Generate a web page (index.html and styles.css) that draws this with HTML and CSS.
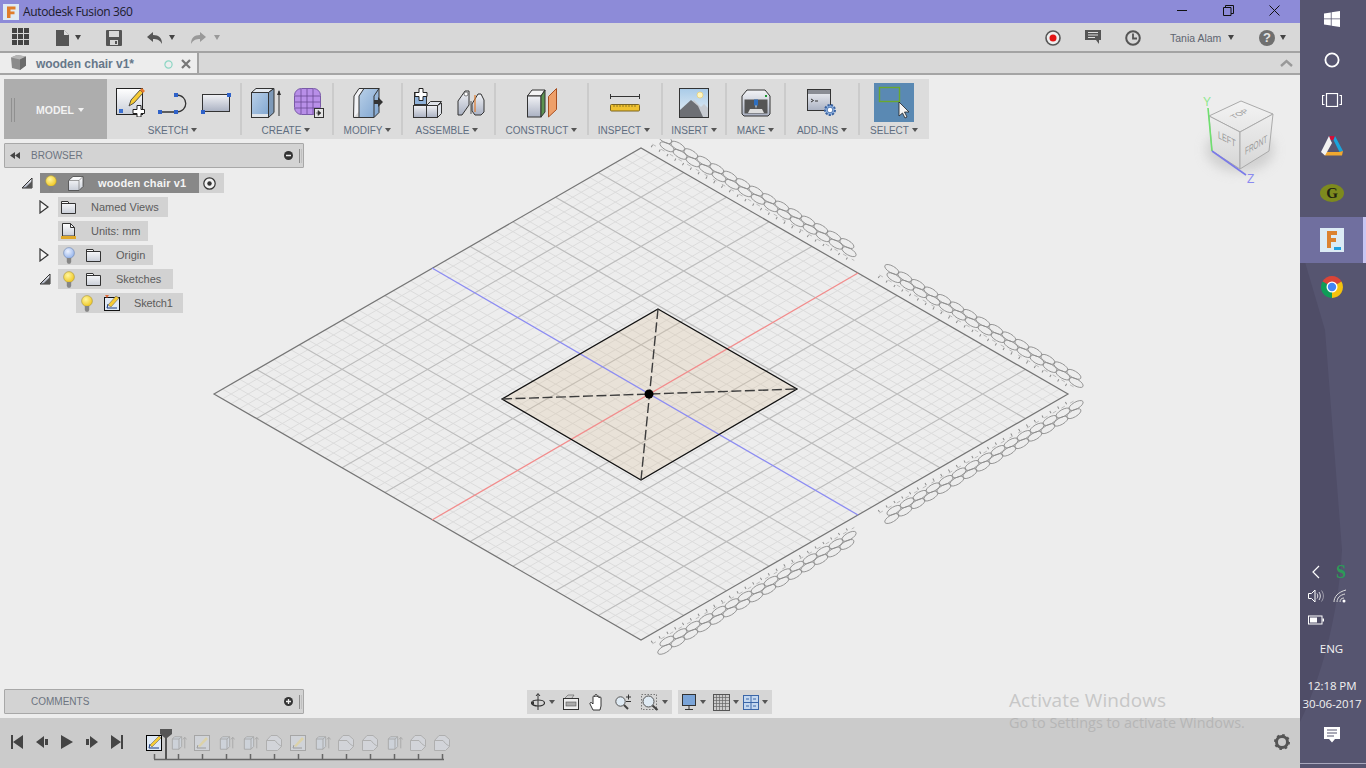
FILE: index.html
```html
<!DOCTYPE html>
<html lang="en">
<head>
<meta charset="utf-8">
<title>Autodesk Fusion 360</title>
<link rel="stylesheet" href="styles.css">
</head>
<body>
<svg class="defs" aria-hidden="true">
  <defs>
    <linearGradient id="gWhite" x1="0" y1="0" x2="0" y2="1"><stop offset="0" stop-color="#fff"/><stop offset="1" stop-color="#c9ced8"/></linearGradient>
    <linearGradient id="gSteel" x1="0" y1="0" x2="0" y2="1"><stop offset="0" stop-color="#f2f3f6"/><stop offset="1" stop-color="#aab1c2"/></linearGradient>
    <linearGradient id="gBlue" x1="0" y1="0" x2="1" y2="1"><stop offset="0" stop-color="#b9d0e8"/><stop offset="1" stop-color="#7fa5d0"/></linearGradient>
    <linearGradient id="gSky" x1="0" y1="0" x2="0" y2="1"><stop offset="0" stop-color="#a9cbe8"/><stop offset="1" stop-color="#e8f0f6"/></linearGradient>
    <radialGradient id="gBulbY" cx=".4" cy=".35" r=".7"><stop offset="0" stop-color="#fff6a0"/><stop offset="1" stop-color="#efc41a"/></radialGradient>
    <radialGradient id="gBulbB" cx=".4" cy=".35" r=".7"><stop offset="0" stop-color="#eef3ff"/><stop offset="1" stop-color="#8fb0ea"/></radialGradient>
    <symbol id="bulbY" viewBox="0 0 12 17"><circle cx="6" cy="6" r="5.400" fill="url(#gBulbY)" stroke="#a89640" stroke-width=".6"/><path d="M3.800 11h4.400v4l-1 1.800H4.800l-1-1.800z" fill="#858585"/></symbol>
    <symbol id="bulbB" viewBox="0 0 12 17"><circle cx="6" cy="6" r="5.400" fill="url(#gBulbB)" stroke="#6f86b0" stroke-width=".6"/><path d="M3.800 11h4.400v4l-1 1.800H4.800l-1-1.800z" fill="#858585"/></symbol>
    <symbol id="folder" viewBox="0 0 15 14"><path d="M.5 1.500h6.500l1 2h6.500v10H.5z" fill="url(#gWhite)" stroke="#333"/><path d="M.5 3.500h7.500" stroke="#333" fill="none"/></symbol>
    <symbol id="twOpen" viewBox="0 0 12 12"><path d="M1 11 11 1v10z" fill="url(#gSteel)" stroke="#333"/><path d="M4 11 11 4v7z" fill="#555"/></symbol>
    <symbol id="twClosed" viewBox="0 0 10 14"><path d="M1 1l8 6-8 6z" fill="#f5f5f5" stroke="#333" stroke-width="1.200"/></symbol>
    <symbol id="tlBox" viewBox="0 0 18 18"><path d="M1.500 4.500 4 2h8v11l-3 3H1.500z" fill="#cfd9e6" stroke="#888"/><path d="M9 16V4.500H1.500M9 4.500 12 2" fill="none" stroke="#888"/><path d="M15.500 15V3M13.500 5l2-2.500 2 2.500" fill="none" stroke="#888"/></symbol>
    <symbol id="tlSketch" viewBox="0 0 16 16"><rect x=".5" y=".5" width="15" height="15" fill="#d5dbe4" stroke="#888"/><path d="M3 13h9M3 13l1-3" stroke="#777" fill="none"/><path d="M4 11 12 2l2 2-8 8z" fill="#ead98f"/></symbol>
    <symbol id="tlShape" viewBox="0 0 16 16"><path d="M.5 5.500 5 .5h6l4.500 4v7l-4 4h-11z" fill="#d8dde6" stroke="#999"/><path d="M.5 5.500H9l2.500 3 4 3" fill="none" stroke="#999"/></symbol>
  </defs>
</svg>

<div class="screen">
  <div class="app">
    <header class="titlebar">
      <svg class="app-logo" width="16" height="16" viewBox="0 0 16 16"><rect width="16" height="16" fill="#dfeaf3"/><path d="M4 2.500h8.500v3H7.500v2h4v2.800h-4V14H4z" fill="#e07d2b"/></svg>
      <span class="title-text">Autodesk Fusion 360</span>
      <div class="win-btns">
        <span class="win-btn"><svg width="11" height="11" viewBox="0 0 11 11"><path d="M0 5.500h10" stroke="#111"/></svg></span>
        <span class="win-btn"><svg width="11" height="11" viewBox="0 0 11 11"><path d="M.5 2.500h7.500v8H.5zM2.500 2.500V.5h8v8H8" fill="none" stroke="#111"/></svg></span>
        <span class="win-btn"><svg width="11" height="11" viewBox="0 0 11 11"><path d="M.5.5l10 10M10.500.5l-10 10" stroke="#111"/></svg></span>
      </div>
    </header>

    <div class="toolbar">
      <svg class="tool-grid" width="17" height="17" viewBox="0 0 17 17" fill="#444"><rect width="5" height="5"/><rect x="6" width="5" height="5"/><rect x="12" width="5" height="5"/><rect y="6" width="5" height="5"/><rect x="6" y="6" width="5" height="5"/><rect x="12" y="6" width="5" height="5"/><rect y="12" width="5" height="5"/><rect x="6" y="12" width="5" height="5"/><rect x="12" y="12" width="5" height="5"/></svg>
      <svg class="ml27" width="13" height="16" viewBox="0 0 13 16"><path d="M0 0h8l5 5v11H0z" fill="#555"/><path d="M8 0v5h5" fill="#ddd"/></svg>
      <i class="caret ml6"></i>
      <svg class="ml25" width="16" height="16" viewBox="0 0 16 16"><path d="M1 0h14a1 1 0 0 1 1 1v14a1 1 0 0 1-1 1H1a1 1 0 0 1-1-1V1a1 1 0 0 1 1-1z" fill="#555"/><rect x="3" y="1" width="10" height="6" fill="#d8d8d8"/><rect x="4" y="10" width="8" height="5" fill="#d8d8d8"/><rect x="9" y="11" width="2" height="3" fill="#555"/></svg>
      <svg class="ml24" width="17" height="14" viewBox="0 0 17 14"><path d="M7 1 1 6l6 5V8c4 0 7 1 9 5 0-6-3-9-9-9z" fill="#555"/></svg>
      <i class="caret ml6"></i>
      <svg class="ml15" width="17" height="14" viewBox="0 0 17 14"><path d="M10 1l6 5-6 5V8C6 8 3 9 1 13c0-6 3-9 9-9z" fill="#999"/></svg>
      <i class="caret caret-dim ml7"></i>
      <div class="tool-right">
        <svg width="16" height="16" viewBox="0 0 16 16"><circle cx="8" cy="8" r="7" fill="#eee" stroke="#555" stroke-width="1.600"/><circle cx="8" cy="8" r="3.500" fill="#e31414"/></svg>
        <svg class="ml24" width="16" height="15" viewBox="0 0 16 15"><path d="M0 0h16v10h-2v4l-3-4H0z" fill="#555"/><path d="M3 2.500h10M3 5h10M3 7.500h7" stroke="#ddd"/></svg>
        <svg class="ml24" width="16" height="16" viewBox="0 0 16 16"><circle cx="8" cy="8" r="6.800" fill="none" stroke="#555" stroke-width="2"/><path d="M8 3.500V8.500h4" fill="none" stroke="#555" stroke-width="1.800"/></svg>
        <span class="user ml29">Tania Alam</span>
        <i class="caret ml6"></i>
        <svg class="ml25" width="16" height="16" viewBox="0 0 16 16"><circle cx="8" cy="8" r="8" fill="#6f6f6f"/><text x="8" y="12" class="help-mark">?</text></svg>
        <i class="caret ml5"></i>
      </div>
    </div>

    <div class="tabbar">
      <div class="tab">
        <svg class="tab-cube" width="17" height="16" viewBox="0 0 17 16"><path d="M1 2.500 7 0l9 1.500v9L10 15l-8-2z" fill="#8b8b8b"/><path d="M1 2.500 10 4.500l6-3L7 0z" fill="#b5b5b5"/><path d="M10 4.500V15l6-4.500v-9z" fill="#6a6a6a"/></svg>
        <span class="tab-name">wooden chair v1*</span>
        <svg class="tab-status" width="9" height="9" viewBox="0 0 9 9"><circle cx="4.500" cy="4.500" r="3.600" fill="none" stroke="#8dd6c4" stroke-width="1.200"/></svg>
        <svg class="tab-close" width="10" height="10" viewBox="0 0 10 10"><path d="M1 1l8 8M9 1 1 9" stroke="#777" stroke-width="2.200"/></svg>
      </div>
      <svg class="tab-collapse" width="13" height="8" viewBox="0 0 13 8"><path d="M1 7l5.500-5L12 7" fill="none" stroke="#999" stroke-width="2.400"/></svg>
    </div>

    <main class="viewport">
      <svg class="scene" width="1300" height="643" viewBox="0 75 1300 643">
        <defs>
          <path id="chain" class="chain" d="M0 0a8 3.400 0 1 0 16 0a8 3.400 0 1 0-16 0M15 0a8 3.400 0 1 0 16 0a8 3.400 0 1 0-16 0M30 0a8 3.400 0 1 0 16 0a8 3.400 0 1 0-16 0M45 0a8 3.400 0 1 0 16 0a8 3.400 0 1 0-16 0M60 0a8 3.400 0 1 0 16 0a8 3.400 0 1 0-16 0M75 0a8 3.400 0 1 0 16 0a8 3.400 0 1 0-16 0M90 0a8 3.400 0 1 0 16 0a8 3.400 0 1 0-16 0M105 0a8 3.400 0 1 0 16 0a8 3.400 0 1 0-16 0M120 0a8 3.400 0 1 0 16 0a8 3.400 0 1 0-16 0M135 0a8 3.400 0 1 0 16 0a8 3.400 0 1 0-16 0M150 0a8 3.400 0 1 0 16 0a8 3.400 0 1 0-16 0M165 0a8 3.400 0 1 0 16 0a8 3.400 0 1 0-16 0M180 0a8 3.400 0 1 0 16 0a8 3.400 0 1 0-16 0M195 0a8 3.400 0 1 0 16 0a8 3.400 0 1 0-16 0M210 0a8 3.400 0 1 0 16 0a8 3.400 0 1 0-16 0"/>
          <g id="edgeLabels">
            <use href="#chain" x="8" y="-20"/>
            <use href="#chain" x="14" y="-14"/>
            <use href="#chain" x="270" y="-20"/>
            <use href="#chain" x="276" y="-14"/>
            <path d="M8-7H241M270-7H492" stroke="#8c8c8c" stroke-width="2.500" stroke-dasharray="1 8" fill="none"/>
            <path d="M8-9H241M270-9H500" stroke="#a4a4a4" stroke-width=".6" stroke-dasharray="4 6" fill="none"/>
          </g>
          <filter id="soft" x="-30%" y="-30%" width="160%" height="160%"><feGaussianBlur stdDeviation="6"/></filter>
          <linearGradient id="faceTop" x1="0" y1="0" x2="0" y2="1"><stop offset="0" stop-color="#f3f3f3"/><stop offset="1" stop-color="#e6e6e6"/></linearGradient>
          <linearGradient id="faceSide" x1="0" y1="0" x2="0" y2="1"><stop offset="0" stop-color="#eeeeee"/><stop offset="1" stop-color="#d6d6d6"/></linearGradient>
        </defs>

        <polygon class="plane" points="214,394 641,148 1068,394 641,640"/>
        <g transform="matrix(8.54 -4.92 8.54 4.92 214 394)">
          <path class="grid-minor" d="M1 0V50M2 0V50M3 0V50M4 0V50M6 0V50M7 0V50M8 0V50M9 0V50M11 0V50M12 0V50M13 0V50M14 0V50M16 0V50M17 0V50M18 0V50M19 0V50M21 0V50M22 0V50M23 0V50M24 0V50M26 0V50M27 0V50M28 0V50M29 0V50M31 0V50M32 0V50M33 0V50M34 0V50M36 0V50M37 0V50M38 0V50M39 0V50M41 0V50M42 0V50M43 0V50M44 0V50M46 0V50M47 0V50M48 0V50M49 0V50M0 1H50M0 2H50M0 3H50M0 4H50M0 6H50M0 7H50M0 8H50M0 9H50M0 11H50M0 12H50M0 13H50M0 14H50M0 16H50M0 17H50M0 18H50M0 19H50M0 21H50M0 22H50M0 23H50M0 24H50M0 26H50M0 27H50M0 28H50M0 29H50M0 31H50M0 32H50M0 33H50M0 34H50M0 36H50M0 37H50M0 38H50M0 39H50M0 41H50M0 42H50M0 43H50M0 44H50M0 46H50M0 47H50M0 48H50M0 49H50"/>
          <path class="grid-major" d="M5 0V50M10 0V50M15 0V50M20 0V50M30 0V50M35 0V50M40 0V50M45 0V50M0 5H50M0 10H50M0 15H50M0 20H50M0 30H50M0 35H50M0 40H50M0 45H50"/>
        </g>
        <polygon class="plane-edge" points="214,394 641,148 1068,394 641,640"/>
        <use href="#edgeLabels" transform="translate(641 148) rotate(29.95)"/>
        <use href="#edgeLabels" transform="translate(641 640) rotate(-29.95) scale(1 -1)"/>

        <polygon class="profile-fill" points="658,309 797,389 641,480 502,399"/>
        <line class="axis-blue" x1="432" y1="268" x2="858" y2="515"/>
        <line class="axis-red" x1="432" y1="520" x2="858" y2="273"/>
        <polygon class="profile-edge" points="658,309 797,389 641,480 502,399"/>
        <path class="profile-dash" d="M658 309 641 480M502 399 797 389"/>
        <circle cx="649" cy="394" r="4.500" fill="#000"/>

        <ellipse cx="1240" cy="150" rx="34" ry="22" fill="#b8b8b8" opacity=".55" filter="url(#soft)"/>
        <polygon points="1241,101 1273,114 1240,132 1209,116" fill="url(#faceTop)" stroke="#aaa"/>
        <polygon points="1209,116 1240,132 1240,169 1212,151" fill="url(#faceSide)" stroke="#aaa"/>
        <polygon points="1240,132 1273,114 1269,151 1240,169" fill="url(#faceSide)" stroke="#aaa"/>
        <text class="cube-text" transform="matrix(.85 -.4 .75 .45 1234 119)">TOP</text>
        <text class="cube-text" transform="matrix(.8 .42 0 1.150 1218 138)">LEFT</text>
        <text class="cube-text" transform="matrix(.72 -.42 0 1.150 1245 155)">FRONT</text>
        <line x1="1212" y1="151" x2="1208" y2="108" stroke="#6fe06f" stroke-width="1.600"/>
        <line x1="1212" y1="151" x2="1246" y2="175" stroke="#7a7ae8" stroke-width="1.600"/>
        <text class="axis-y" x="1203" y="106">Y</text>
        <text class="axis-z" x="1247" y="183">Z</text>
      </svg>

      <div class="overlay">
        <nav class="ribbon">
          <div class="model">
            <i class="grip"></i>
            <span class="model-label">MODEL</span>
            <i class="caret caret-white ml4"></i>
          </div>
          <section class="group g-sketch">
            <div class="icons">
              <svg width="29" height="29" viewBox="0 0 29 29"><rect x=".5" y=".5" width="26" height="26" fill="url(#gWhite)" stroke="#222"/><rect x="3" y="21" width="4" height="4" fill="#3a6fd0"/><path d="M13 18l2-6 9-10 3 3-9 10z" fill="#f6cb36" stroke="#333" stroke-width=".8"/><path d="M24 2l2-2 3 3-2 2z" fill="#e8792a"/><path d="M21 17.500h4v4h3.500v4H25v3.500h-4v-3.500h-4v-4h4z" fill="#fff" stroke="#222"/></svg>
              <svg width="32" height="24" viewBox="0 0 32 24"><path d="M3 21H19M19 4c13 0 13 17 0 17" fill="none" stroke="#333" stroke-width="1.300"/><rect x="1" y="19" width="4" height="4" fill="#2f62c9"/><rect x="17" y="19" width="4" height="4" fill="#2f62c9"/><rect x="17" y="2" width="4" height="4" fill="#2f62c9"/></svg>
              <svg width="30" height="24" viewBox="0 0 30 24"><rect x="1.500" y="3.500" width="27" height="17" fill="url(#gSteel)" stroke="#333"/><rect x="26" y="2" width="4" height="4" fill="#2f62c9"/><rect x="0" y="19" width="4" height="4" fill="#2f62c9"/></svg>
            </div>
            <div class="label">SKETCH<i class="caret caret-sm"></i></div>
          </section>
          <i class="rib-div"></i>
          <section class="group g-create">
            <div class="icons">
              <svg width="30" height="30" viewBox="0 0 30 30"><path d="M.5 4.500 5 .5h18l-5.500 4z" fill="#e4e9ef" stroke="#333"/><rect x=".5" y="4.500" width="17" height="25" fill="url(#gBlue)" stroke="#333"/><path d="M17.500 4.500 23 .5v24l-5.500 5z" fill="#7d99b8" stroke="#333"/><rect x="1" y="26" width="16" height="3" fill="#dfe4ea"/><path d="M28 28V3" stroke="#333"/><path d="M26 7 28 2l2 5z" fill="#333"/></svg>
              <svg width="30" height="30" viewBox="0 0 30 30"><rect x=".5" y=".5" width="26" height="26" rx="7" fill="#b88fe8" stroke="#7a5aa8"/><path d="M1 8h25M1 14h25M1 20h25M7 1v25M13 1v25M19 1v25" stroke="#6b4a96" stroke-width=".8" fill="none"/><rect x="20.500" y="20.500" width="9" height="9" fill="#e4e4e4" stroke="#333"/><path d="M22 25h3M24 22.500l3 2.500-3 2.500z" fill="#333" stroke="#333" stroke-width=".6"/></svg>
            </div>
            <div class="label">CREATE<i class="caret caret-sm"></i></div>
          </section>
          <i class="rib-div"></i>
          <section class="group g-modify">
            <div class="icons">
              <svg width="30" height="30" viewBox="0 0 30 30"><path d="M.5 29.500 1 8 6 .5h20l-5 7" fill="#f2f3f6" stroke="#333"/><path d="M6 29.500V8l5-7.500h15v24L21 29.500z" fill="url(#gBlue)" stroke="#333"/><path d="M.5 29.500H21" stroke="#333"/><path d="M21 8v21.500" stroke="#333"/><path d="M21 8 26 .5" stroke="#333"/><path d="M21 12h4v-3l5 5-5 5v-3h-4z" fill="#333"/></svg>
            </div>
            <div class="label">MODIFY<i class="caret caret-sm"></i></div>
          </section>
          <i class="rib-div"></i>
          <section class="group g-assemble">
            <div class="icons">
              <svg width="29" height="30" viewBox="0 0 29 30"><rect x="1.500" y="4.500" width="12" height="12" fill="#8fb2da" stroke="#333"/><rect x=".5" y="17.500" width="13" height="12" fill="url(#gSteel)" stroke="#333"/><rect x="13.500" y="17.500" width="11" height="12" fill="url(#gSteel)" stroke="#333"/><path d="M24.500 29.500l4-4V15l-4 2.500zM13.500 17.500l4-4h11l-4 4z" fill="#dfe3ea" stroke="#333"/><path d="M6 .5h4v4h4v4h-4v4H6v-4H2v-4h4z" fill="#fff" stroke="#222"/></svg>
              <svg width="28" height="28" viewBox="0 0 28 28"><path d="M1 12 8 2h4v14L5 26H1z" fill="url(#gSteel)" stroke="#333"/><path d="M15 15l6-10h3l3 6v12l-3 3h-6l-3-4z" fill="url(#gSteel)" stroke="#333"/><path d="M18 6v17" stroke="#e07b2a" stroke-width="1.200"/><path d="M14 12v13" stroke="#555"/><circle cx="9" cy="5" r="2" fill="#fff" stroke="#333" stroke-width=".6"/></svg>
            </div>
            <div class="label">ASSEMBLE<i class="caret caret-sm"></i></div>
          </section>
          <i class="rib-div"></i>
          <section class="group g-construct">
            <div class="icons">
              <svg width="30" height="30" viewBox="0 0 30 30"><path d="M.5 8 5 2h13l-4 6z" fill="#f4f4f4" stroke="#333"/><rect x=".5" y="8" width="13.500" height="21" fill="url(#gSteel)" stroke="#333"/><path d="M14 8l4-6v22l-4 5z" fill="#5c9350" stroke="#333"/><path d="M21.500 8.500 29.500.5v21l-8 7.500z" fill="#eea06a" stroke="#a84f20"/></svg>
            </div>
            <div class="label">CONSTRUCT<i class="caret caret-sm"></i></div>
          </section>
          <i class="rib-div"></i>
          <section class="group g-inspect">
            <div class="icons">
              <svg width="30" height="18" viewBox="0 0 30 18"><path d="M.5 0v5M29.500 0v5M1 2.500h28" stroke="#333" fill="none"/><rect x=".5" y="10.500" width="29" height="6.500" rx="1" fill="#efc12f" stroke="#7a6420"/><path d="M4 11v2M7 11v2M10 11v2M13 11v2M16 11v2M19 11v2M22 11v2M25 11v2" stroke="#7a6420" stroke-width=".8"/></svg>
            </div>
            <div class="label">INSPECT<i class="caret caret-sm"></i></div>
          </section>
          <i class="rib-div"></i>
          <section class="group g-insert">
            <div class="icons">
              <svg width="30" height="30" viewBox="0 0 30 30"><rect x=".5" y=".5" width="29" height="29" fill="url(#gSky)" stroke="#333"/><circle cx="21" cy="7" r="3" fill="#fff6c0" stroke="#e8c860" stroke-width=".6"/><path d="M1 29V25L15 12l7 7 3-3 4 4v9z" fill="#c8ccd2"/><path d="M1 29V22l11-10 7 6 5 11z" fill="#6d6f74"/></svg>
            </div>
            <div class="label">INSERT<i class="caret caret-sm"></i></div>
          </section>
          <i class="rib-div"></i>
          <section class="group g-make">
            <div class="icons">
              <svg width="30" height="28" viewBox="0 0 30 28"><path d="M1 7l5-6h18l5 6v18l-2 2H3l-2-2z" fill="url(#gSteel)" stroke="#333"/><rect x="3.500" y="10.500" width="23" height="14" fill="#555"/><rect x="13" y="10.500" width="4" height="6" fill="#2e6fc0"/><path d="M14 16.500h2l-1 3z" fill="#bcd"/><path d="M7 24l2-4h12l2 4z" fill="#ddd"/><rect x="24" y="6" width="2" height="2" fill="#1a9a30"/></svg>
            </div>
            <div class="label">MAKE<i class="caret caret-sm"></i></div>
          </section>
          <i class="rib-div"></i>
          <section class="group g-addins">
            <div class="icons">
              <svg width="30" height="28" viewBox="0 0 30 28"><rect x=".5" y=".5" width="23" height="21" fill="url(#gSteel)" stroke="#333"/><rect x="1" y="1" width="22" height="4" fill="#8a8d94"/><path d="M4 10l2.500 1.500L4 13M8 12h3" stroke="#333" fill="none"/><circle cx="23" cy="21" r="5" fill="#8fb4e4" stroke="#3a62a0" stroke-width="2" stroke-dasharray="2.200 1.200"/><circle cx="23" cy="21" r="2.800" fill="#fff" stroke="#3a62a0" stroke-width=".8"/></svg>
            </div>
            <div class="label">ADD-INS<i class="caret caret-sm"></i></div>
          </section>
          <i class="rib-div"></i>
          <section class="group g-select">
            <div class="icons">
              <span class="select-btn"><svg width="40" height="39" viewBox="0 0 40 39"><rect x="5.500" y="4.500" width="20" height="14" fill="none" stroke="#6aa82e" stroke-width="1.400"/><path d="M25 19v14l3.500-3 2.500 5 2-1-2.500-5h4.500z" fill="#f4f4f4" stroke="#222" stroke-width=".8"/></svg></span>
            </div>
            <div class="label">SELECT<i class="caret caret-sm"></i></div>
          </section>
        </nav>

        <section class="panel panel-browser">
          <svg class="panel-back" width="10" height="7" viewBox="0 0 10 7" fill="#444"><path d="M5 0v7L0 3.500zM10 0v7L5 3.500z"/></svg>
          <span class="panel-title">BROWSER</span>
          <svg class="panel-btn" width="9" height="9" viewBox="0 0 9 9"><circle cx="4.500" cy="4.500" r="4.500" fill="#333"/><path d="M2 4.500h5" stroke="#eee" stroke-width="1.500"/></svg>
          <i class="panel-grip"></i>
        </section>

        <ul class="tree">
          <li class="row lv0">
            <span class="twist"><svg width="12" height="12"><use href="#twOpen"/></svg></span>
            <div class="bar bar-root">
              <span class="bulb"><svg width="12" height="17"><use href="#bulbY"/></svg></span>
              <svg class="ico-cube" width="16" height="15" viewBox="0 0 16 15"><path d="M.5 4.500 5 .5h10v10l-4 4H.5z" fill="url(#gWhite)" stroke="#333" stroke-width=".7"/><path d="M.5 4.500H11v10M11 4.500 15 .5" fill="none" stroke="#777" stroke-width=".7"/></svg>
              <span class="name name-root">wooden chair v1</span>
            </div>
            <span class="radio"><svg width="13" height="13" viewBox="0 0 13 13"><circle cx="6.500" cy="6.500" r="5.700" fill="#f1f1f1" stroke="#333" stroke-width="1.200"/><circle cx="6.500" cy="6.500" r="2.200" fill="#333"/></svg></span>
          </li>
          <li class="row lv1">
            <span class="twist"><svg width="10" height="14"><use href="#twClosed"/></svg></span>
            <div class="bar b-named">
              <svg class="ico" width="15" height="14"><use href="#folder"/></svg>
              <span class="name name-gap">Named Views</span>
            </div>
          </li>
          <li class="row lv1">
            <span class="twist"></span>
            <div class="bar b-units">
              <svg class="ico" width="15" height="16" viewBox="0 0 15 16"><path d="M1.500.5h8l4 4V13h-12z" fill="url(#gWhite)" stroke="#333"/><path d="M9.500.5v4h4" fill="none" stroke="#333"/><rect y="13" width="15" height="3" fill="#e0a92a"/></svg>
              <span class="name name-gap">Units: mm</span>
            </div>
          </li>
          <li class="row lv1">
            <span class="twist"><svg width="10" height="14"><use href="#twClosed"/></svg></span>
            <div class="bar b-origin">
              <span class="bulb"><svg width="12" height="17"><use href="#bulbB"/></svg></span>
              <svg class="ico ml10" width="15" height="14"><use href="#folder"/></svg>
              <span class="name name-gap">Origin</span>
            </div>
          </li>
          <li class="row lv1">
            <span class="twist"><svg width="12" height="12"><use href="#twOpen"/></svg></span>
            <div class="bar b-sketches">
              <span class="bulb"><svg width="12" height="17"><use href="#bulbY"/></svg></span>
              <svg class="ico ml10" width="15" height="14"><use href="#folder"/></svg>
              <span class="name name-gap">Sketches</span>
            </div>
          </li>
          <li class="row lv2">
            <span class="twist"></span>
            <div class="bar b-sketch1">
              <span class="bulb"><svg width="12" height="17"><use href="#bulbY"/></svg></span>
              <svg class="ico ml10" width="16" height="16" viewBox="0 0 16 16"><rect x=".5" y="2.500" width="15" height="13" fill="#dfe9f5" stroke="#111"/><path d="M3 13h10M3 13l1-4" stroke="#1a3a80" fill="none"/><path d="M4 10 12 1l3 2-8 9z" fill="#f6cb36" stroke="#555" stroke-width=".5"/><path d="M1 0h4L3 3z" fill="#e06a3a"/></svg>
              <span class="name name-gap name-tight">Sketch1</span>
            </div>
          </li>
        </ul>

        <div class="bottom-row">
          <section class="panel panel-comments">
            <span class="panel-title">COMMENTS</span>
            <svg class="panel-btn" width="9" height="9" viewBox="0 0 9 9"><circle cx="4.500" cy="4.500" r="4.500" fill="#333"/><path d="M2 4.500h5M4.500 2v5" stroke="#eee" stroke-width="1.300"/></svg>
            <i class="panel-grip"></i>
          </section>
          <div class="nav nav-a">
            <svg width="14" height="18" viewBox="0 0 14 18"><path d="M7 1v16M5 3l2-2.500L9 3" fill="none" stroke="#333"/><ellipse cx="7" cy="10" rx="6.500" ry="3" fill="none" stroke="#333" stroke-width="1.200"/><path d="M0 10l3-2v4z" fill="#333"/></svg>
            <i class="caret caret-sm ml4"></i>
            <svg class="ml8" width="16" height="16" viewBox="0 0 16 16"><rect x=".5" y="4.500" width="15" height="11" fill="#eee" stroke="#333"/><rect x="3" y="8" width="10" height="4" fill="#aaa" stroke="#555" stroke-width=".6"/><path d="M2 4l3-3h6l-2 3" fill="#ccc" stroke="#555" stroke-width=".6"/></svg>
            <svg class="ml10" width="16" height="17" viewBox="0 0 16 17"><path d="M4 16 1 10c-.5-1.500 1-2 2-1l1 1V3c0-1.500 2-1.500 2 0V1.500c0-1.500 2-1.500 2 0V3c0-1.500 2-1.500 2 0v1c0-1.500 2-1.500 2 0v8l-1 4z" fill="#fff" stroke="#222" stroke-width=".9"/></svg>
            <svg class="ml10" width="16" height="16" viewBox="0 0 16 16"><circle cx="5.500" cy="7.500" r="4.700" fill="#dfeaf3" stroke="#555"/><path d="M9 11l4 4" stroke="#444" stroke-width="2"/><path d="M11 3h5M13.500.5v5M11 7.500h5" stroke="#333" fill="none"/></svg>
            <svg class="ml10" width="18" height="17" viewBox="0 0 18 17"><rect x=".5" y=".5" width="15" height="15" fill="none" stroke="#777" stroke-dasharray="1.500 1.500"/><circle cx="7.500" cy="7.500" r="5.500" fill="#dfeaf3" stroke="#555"/><path d="M11.500 11.500l5 4.500" stroke="#444" stroke-width="2.200"/></svg>
            <i class="caret caret-sm ml3"></i>
          </div>
          <div class="nav nav-b">
            <svg width="14" height="16" viewBox="0 0 14 16"><rect x=".5" y=".5" width="13" height="11" fill="#7aa4d8" stroke="#333"/><path d="M7 11.500V15M3 15.500h8" stroke="#333"/></svg>
            <i class="caret caret-sm ml4"></i>
            <svg class="ml7" width="17" height="17" viewBox="0 0 17 17"><rect x=".5" y=".5" width="16" height="16" fill="#ccc" stroke="#555"/><path d="M3.500 1v15M6.500 1v15M9.500 1v15M12.500 1v15M1 3.500h15M1 6.500h15M1 9.500h15M1 12.500h15" stroke="#666" stroke-width=".7"/></svg>
            <i class="caret caret-sm ml3"></i>
            <svg class="ml4" width="16" height="15" viewBox="0 0 16 15"><rect x=".5" y=".5" width="15" height="14" fill="#c4d8f0" stroke="#3a66a8"/><path d="M8 1v13M1 7.500h14M3 4h3M10 4h3M3 11h3M10 11h3" stroke="#3a66a8"/></svg>
            <i class="caret caret-sm ml3"></i>
          </div>
        </div>
      </div>
    </main>

    <footer class="timeline">
      <div class="tl-controls">
        <svg width="14" height="14" viewBox="0 0 14 14" fill="#444"><path d="M1 0h2v14H1zM13 0v14L3 7z"/></svg>
        <svg width="14" height="14" viewBox="0 0 14 14" fill="#444"><path d="M9 1v12L1 7zM10 4h3v6h-3z"/></svg>
        <svg width="14" height="14" viewBox="0 0 14 14" fill="#444"><path d="M1 0l12 7-12 7z"/></svg>
        <svg width="14" height="14" viewBox="0 0 14 14" fill="#444"><path d="M5 1v12l8-6zM1 4h3v6H1z"/></svg>
        <svg width="14" height="14" viewBox="0 0 14 14" fill="#444"><path d="M1 0l10 7-10 7zM11 0h2v14h-2z"/></svg>
      </div>
      <div class="tl-track">
        <div class="tl-items">
          <svg class="tl-item" width="16" height="16" viewBox="0 0 16 16"><rect x=".5" y=".5" width="15" height="15" fill="#dfe9f5" stroke="#000"/><path d="M3 13h10M3 13l1-4" stroke="#1a3a80" fill="none"/><path d="M4 10l9-9 2 2-9 9z" fill="#f6cb36" stroke="#555" stroke-width=".5"/></svg>
          <svg class="tl-item ghost wide" width="18" height="16"><use href="#tlBox"/></svg>
          <svg class="tl-item ghost" width="16" height="16"><use href="#tlSketch"/></svg>
          <svg class="tl-item ghost wide" width="18" height="16"><use href="#tlBox"/></svg>
          <svg class="tl-item ghost wide" width="18" height="16"><use href="#tlBox"/></svg>
          <svg class="tl-item ghost" width="16" height="16"><use href="#tlShape"/></svg>
          <svg class="tl-item ghost" width="16" height="16"><use href="#tlSketch"/></svg>
          <svg class="tl-item ghost wide" width="18" height="16"><use href="#tlBox"/></svg>
          <svg class="tl-item ghost" width="16" height="16"><use href="#tlShape"/></svg>
          <svg class="tl-item ghost" width="16" height="16"><use href="#tlShape"/></svg>
          <svg class="tl-item ghost wide" width="18" height="16"><use href="#tlBox"/></svg>
          <svg class="tl-item ghost" width="16" height="16"><use href="#tlShape"/></svg>
          <svg class="tl-item ghost" width="16" height="16"><use href="#tlShape"/></svg>
        </div>
        <svg class="tl-ruler" width="300" height="33" viewBox="0 0 300 33">
          <path d="M8 30.500H298M8.500 25v5M32.500 25v5M56.500 25v5M80.500 25v5M104.500 25v5M128.500 25v5M152.500 25v5M176.500 25v5M200.500 25v5M224.500 25v5M248.500 25v5M272.500 25v5M296.500 25v5" fill="none" stroke="#666" stroke-width="1.500"/>
          <path d="M14 0h12v5l-5 4v21h-2V9l-5-4z" fill="#555"/>
        </svg>
      </div>
      <svg class="tl-gear" width="16" height="16" viewBox="0 0 16 16"><circle cx="8" cy="8" r="5.500" fill="none" stroke="#555" stroke-width="3"/><circle cx="8" cy="8" r="7" fill="none" stroke="#555" stroke-width="2" stroke-dasharray="2.500 3"/></svg>
    </footer>

    <div class="activate">
      <div class="activate-big">Activate Windows</div>
      <div class="activate-small">Go to Settings to activate Windows.</div>
    </div>
  </div>

  <aside class="taskbar">
    <svg class="tb-wedge" width="66" height="768" viewBox="0 0 66 768"><path d="M0 245 25 330 42 550C38 620 20 680 0 722z" fill="#4f4d67"/></svg>
    <div class="tb-top">
      <div class="tb-s1"><svg width="16" height="16" viewBox="0 0 16 16" fill="#fff"><path d="M0 2.500 6.800 1.400V7.500H0zM7.600 1.300 16 0v7.500H7.600zM0 8.300h6.800v6.200L0 13.500zM7.600 8.300H16V16L7.600 14.700z"/></svg></div>
      <div class="tb-s2"><svg width="16" height="16" viewBox="0 0 16 16"><circle cx="8" cy="8" r="6.600" fill="none" stroke="#fff" stroke-width="1.800"/></svg></div>
      <div class="tb-s3"><svg width="20" height="14" viewBox="0 0 20 14" fill="none" stroke="#fff" stroke-width="1.200"><rect x="4.500" y=".5" width="11" height="13"/><path d="M2.500 2.500H.5v9h2M17.500 2.500h2v9h-2"/></svg></div>
      <div class="tb-item"><svg width="24" height="22" viewBox="0 0 24 22"><path d="M9 1h6l-1.500 4h-3z" fill="#d0103a"/><path d="M15 1l8 15-3.500 1L13.500 5z" fill="#1aa5dc"/><path d="M2 17h17.500l3.500-1-1 4.500H5z" fill="#f0a830"/><path d="M9 1 1 17l4 3.500L7 17 12 8 10.500 5z" fill="#f2f2f2"/></svg></div>
      <div class="tb-item"><span class="g-blob"><span class="g-letter">G</span></span></div>
      <div class="tb-item tb-active"><span class="f-tile"><svg width="24" height="24" viewBox="0 0 24 24"><path d="M0 0h24v24H0z" fill="#dcebf5"/><path d="M7 3h10v4h-6v3h5v4h-5v6H7z" fill="#dc8230"/><rect x="14" y="19" width="7" height="3" fill="#22a0e0"/></svg></span></div>
      <div class="tb-item"><svg width="24" height="24" viewBox="0 0 24 24"><path d="M2.500 6.500A11 11 0 0 1 21.500 6.500L12 12z" fill="#db4437"/><path d="M21.500 6.500A11 11 0 0 1 12 23L12 12z" fill="#f4c20d"/><path d="M12 23A11 11 0 0 1 2.500 6.500L12 12z" fill="#0f9d58"/><circle cx="12" cy="12" r="5.500" fill="#fff"/><circle cx="12" cy="12" r="4.200" fill="#4285f4"/></svg></div>
    </div>
    <div class="tray">
      <div class="tray-row">
        <svg class="tray-ico" width="16" height="14" viewBox="0 0 16 14"><path d="M11 1 5 7l6 6" fill="none" stroke="#fff" stroke-width="1.200"/></svg>
        <span class="tray-s">S</span>
      </div>
      <div class="tray-row">
        <svg class="tray-ico" width="16" height="14" viewBox="0 0 16 14" fill="none" stroke="#fff"><path d="M.5 4.500h3l3.500-3.500v12L3.500 9.500h-3z"/><path d="M9 4.500c1 1.500 1 3.500 0 5M11 3c1.800 2.500 1.800 5.500 0 8" stroke-opacity=".8"/><path d="M13.500 1.500c2.500 3.500 2.500 7.500 0 11" stroke-opacity=".45"/></svg>
        <svg class="tray-ico" width="16" height="14" viewBox="0 0 16 14" fill="none" stroke="#ddd"><path d="M1 13C1 8 5 3 13 1M4 13c0-4 3-7 8-8M7 13c0-2 1-4 4-4"/><circle cx="11" cy="12" r="1.500" fill="#fff" stroke="none"/></svg>
      </div>
      <div class="tray-row">
        <svg class="tray-ico" width="16" height="14" viewBox="0 0 16 14"><rect x=".5" y="3" width="13.500" height="8" fill="none" stroke="#fff"/><rect x="2" y="4.500" width="7" height="5" fill="#fff"/><rect x="14.500" y="5.500" width="1.500" height="3" fill="#fff"/></svg>
      </div>
      <div class="tray-eng">ENG</div>
      <div class="tray-clock">
        <div>12:18 PM</div>
        <div>30-06-2017</div>
      </div>
      <div class="tray-note"><svg width="16" height="16" viewBox="0 0 16 16"><path d="M0 0h16v12h-5l-3 3.500L5 12H0z" fill="#fff"/><path d="M3 3h10M3 6h10M3 9h7" stroke="#55546f"/></svg></div>
      <i class="tray-line"></i>
    </div>
  </aside>
</div>
</body>
</html>
```
FILE: styles.css
```css
* { box-sizing: border-box; }
html, body { margin: 0; padding: 0; height: 768px; overflow: hidden; }
body { font-family: "Liberation Sans", Arial, sans-serif; background: #ededed; color: #333; }
svg { display: block; flex: none; }
i { display: block; flex: none; }
ul { list-style: none; margin: 0; padding: 0; }
.defs { position: absolute; width: 0; height: 0; }

.screen { display: flex; width: 1366px; height: 768px; }
.app { position: relative; width: 1300px; height: 768px; display: flex; flex-direction: column; }

.ml3 { margin-left: 3px; } .ml4 { margin-left: 4px; } .ml5 { margin-left: 5px; } .ml6 { margin-left: 6px; }
.ml7 { margin-left: 7px; } .ml8 { margin-left: 8px; } .ml10 { margin-left: 10px; } .ml15 { margin-left: 15px; }
.ml24 { margin-left: 24px; } .ml25 { margin-left: 25px; } .ml27 { margin-left: 27px; } .ml29 { margin-left: 29px; }

.caret { width: 0; height: 0; border-left: 3.5px solid transparent; border-right: 3.5px solid transparent; border-top: 5px solid #444; }
.caret-sm { border-left-width: 3px; border-right-width: 3px; border-top-width: 4px; border-top-color: #555; }
.caret-dim { border-top-color: #999; }
.caret-white { border-left-width: 3px; border-right-width: 3px; border-top: 4px solid #f2f2f2; }

/* title bar */
.titlebar { height: 23px; flex: none; background: #8d8bd8; display: flex; align-items: center; padding: 0 3px; }
.title-text { margin-left: 4px; font-family: "Open Sans", sans-serif; font-size: 12px; letter-spacing: -.35px; color: #1c1c2c; }
.win-btns { margin-left: auto; display: flex; }
.win-btn { width: 46px; height: 23px; display: flex; align-items: center; justify-content: center; padding-bottom: 2px; }

/* quick access toolbar */
.toolbar { height: 30px; flex: none; background: #d8d8d8; border-bottom: 2px solid #a3a3a3; display: flex; align-items: center; padding: 1px 14px 0 12px; }
.tool-grid { margin-top: -2px; }
.tool-right { margin-left: auto; display: flex; align-items: center; }
.user { font-size: 10.5px; color: #5e6570; width: 52px; white-space: nowrap; }
.help-mark { font: bold 13px "Liberation Sans", sans-serif; fill: #e4e4e4; text-anchor: middle; }

/* document tabs */
.tabbar { height: 22px; flex: none; background: #d8d8d8; border-bottom: 2px solid #a5a5a5; display: flex; align-items: center; justify-content: space-between; padding-right: 7px; }
.tab { width: 199px; height: 20px; background: #ededed; border-right: 2px solid #a3a3a3; display: flex; align-items: center; padding: 2px 0 0 10px; }
.tab-cube { margin-top: -2px; }
.tab-name { margin-left: 9px; width: 128px; font-size: 12px; font-weight: bold; letter-spacing: -.05px; color: #667789; white-space: nowrap; }
.tab-close { margin-left: 8px; }

/* viewport */
.viewport { position: relative; flex: 1; min-height: 0; background: #ededed; overflow: hidden; }
.scene { position: absolute; left: 0; top: 0; }
.plane { fill: #ededed; }
.plane-edge { fill: none; stroke: #757575; stroke-width: 1.200; }
.grid-minor { fill: none; stroke: #dcdcdc; stroke-width: 1; vector-effect: non-scaling-stroke; }
.grid-major { fill: none; stroke: #bcbcbc; stroke-width: 1.200; vector-effect: non-scaling-stroke; }
.chain { fill: none; stroke: #8a8a8a; stroke-width: .8; }
.profile-fill { fill: #dfc3a0; fill-opacity: .27; stroke: none; }
.profile-edge { fill: none; stroke: #111; stroke-width: 1.300; }
.profile-dash { fill: none; stroke: #3c3c3c; stroke-width: 1.400; stroke-dasharray: 10 3.500; }
.axis-red { stroke: #f28c8c; stroke-width: 1.300; }
.axis-blue { stroke: #8c8cf2; stroke-width: 1.300; }
.cube-text { font: 9px "Liberation Sans", sans-serif; fill: #999; }
.axis-y { font: 12px "Liberation Sans", sans-serif; fill: #8fe88f; }
.axis-z { font: 12px "Liberation Sans", sans-serif; fill: #8a8af0; }

.overlay { position: relative; height: 100%; display: flex; flex-direction: column; }

/* ribbon */
.ribbon { display: flex; width: 925px; height: 60px; margin: 4px 0 0 4px; background: #dcdcdc; flex: none; }
.model { width: 103px; background: #adadad; display: flex; align-items: center; padding: 1px 0 0 7px; }
.grip { width: 4px; height: 24px; border-left: 1px solid #909090; border-right: 1px solid #909090; margin-right: 21px; }
.model-label { font-size: 10.5px; font-weight: bold; color: #f2f2f2; }
.group { padding-top: 4px; display: flex; flex-direction: column; }
.icons { height: 39px; display: flex; align-items: center; justify-content: center; }
.label { height: 16px; display: flex; align-items: center; justify-content: center; font-size: 10px; color: #5f6d80; white-space: nowrap; }
.label .caret { margin-left: 3px; }
.rib-div { width: 2px; margin: 4px 0; background: #cbcbcb; }
.g-sketch { width: 133px; } .g-sketch .icons { gap: 12px; } .g-sketch .label { padding-right: 2px; }
.g-create { width: 90px; } .g-create .icons { gap: 13px; } .g-create .label { padding-right: 2px; }
.g-modify { width: 67px; }
.g-assemble { width: 91px; } .g-assemble .icons { gap: 15px; } .g-assemble .label { padding-right: 3px; }
.g-construct { width: 91px; }
.g-inspect { width: 72px; } .g-inspect .label { padding-right: 2px; }
.g-insert { width: 62px; }
.g-make { width: 57px; }
.g-addins { width: 72px; }
.g-select { width: 69px; padding-right: 1px; }
.select-btn { display: block; width: 40px; height: 39px; background: #5a89b3; }

/* panels */
.panel { width: 300px; height: 25px; background: #d3d3d3; border: 1px solid #a8a8a8; border-radius: 1px; display: flex; align-items: center; flex: none; }
.panel-browser { margin: 4px 0 0 4px; padding-left: 5px; }
.panel-back { margin-right: 11px; }
.panel-comments { padding-left: 26px; }
.panel-title { font-size: 10px; color: #6c7380; }
.panel-btn { margin-left: auto; }
.panel-grip { width: 3px; height: 14px; margin: 0 1px 0 6px; border-left: 1px solid #8e8e8e; border-right: 1px solid #c0c0c0; }

/* tree */
.tree { margin-top: 5px; flex: none; }
.row { display: flex; align-items: center; height: 20px; margin-bottom: 4px; }
.lv0 { margin-left: 20px; }
.lv1 { margin-left: 38px; }
.lv2 { margin-left: 56px; }
.twist { width: 20px; height: 20px; display: flex; align-items: center; padding-left: 1px; }
.bar { height: 20px; display: flex; align-items: center; background: #d2d2d2; padding-left: 3px; }
.bar-root { width: 159px; background: #888; }
.b-named { width: 110px; }
.b-units { width: 90px; }
.b-origin { width: 95px; }
.b-sketches { width: 115px; }
.b-sketch1 { width: 107px; }
.bulb { width: 15px; display: flex; justify-content: center; }
.ico-cube { margin-left: 10px; }
.name { font-size: 11px; color: #5c5c5c; white-space: nowrap; }
.name-gap { margin-left: 15px; }
.name-tight { letter-spacing: -.15px; margin-left: 14px; }
.name-root { margin-left: 14px; font-weight: bold; letter-spacing: .14px; color: #f4f4f4; }
.radio { width: 25px; height: 20px; background: #d2d2d2; display: flex; align-items: center; padding-left: 4px; }

/* bottom row */
.bottom-row { margin-top: auto; margin-bottom: 4px; padding-left: 4px; display: flex; align-items: flex-start; flex: none; }
.nav { height: 24px; margin-top: 1px; background: #d6d6d6; display: flex; align-items: center; padding: 0 4px; flex: none; }
.nav-a { margin-left: 223px; width: 145px; }
.nav-b { margin-left: 6px; width: 94px; }

/* timeline */
.timeline { height: 50px; flex: none; background: #cbcbcb; display: flex; align-items: flex-start; }
.tl-controls { display: flex; gap: 11px; padding: 17px 0 0 10px; }
.tl-track { position: relative; margin-left: 22px; height: 50px; }
.tl-items { display: flex; padding-top: 17px; }
.tl-item { margin-right: 8px; }
.tl-item.wide { margin-right: 6px; }
.tl-item.ghost { opacity: .55; }
.tl-ruler { position: absolute; left: 0; top: 11px; }
.tl-gear { margin: 16px 10px 0 auto; }

/* watermark */
.activate { position: absolute; left: 1009px; top: 688px; pointer-events: none; font-family: "Open Sans", sans-serif; }
.activate-big { font-size: 19px; line-height: 24px; color: #c7c7c7; letter-spacing: .08px; white-space: nowrap; }
.activate-small { font-size: 14.4px; line-height: 22px; color: #b6b6b6; white-space: nowrap; }

/* taskbar */
.taskbar { position: relative; width: 66px; height: 768px; background: #565570; display: flex; flex-direction: column; }
.tb-wedge { position: absolute; left: 0; top: 0; }
.tb-top { position: relative; display: flex; flex-direction: column; }
.tb-s1, .tb-s2, .tb-s3 { display: flex; align-items: center; justify-content: center; padding-right: 2px; }
.tb-s1 { height: 38px; } .tb-s2 { height: 44px; } .tb-s3 { height: 36px; margin-bottom: 5px; }
.tb-item { height: 46px; margin-bottom: 1px; display: flex; align-items: center; justify-content: center; padding-right: 2px; }
.tb-active { background: #706f9f; border-right: 3px solid #c9c6f2; padding: 0 0 0 1px; }
.g-blob { width: 24px; height: 18px; border-radius: 50%; background: #7d8a1e; display: flex; align-items: center; justify-content: center; }
.g-letter { font: bold 15px "Liberation Serif", serif; color: #1e2210; }
.f-tile { display: block; }
.tray { position: relative; margin-top: auto; padding: 0 0 4px; color: #fff; }
.tray-row { height: 24px; display: flex; align-items: center; padding-left: 8px; gap: 9px; }
.tray-s { width: 16px; text-align: center; font: bold 18px "Liberation Serif", serif; color: #2c9a58; }
.tray-eng { height: 34px; line-height: 34px; padding-right: 3px; text-align: center; font-family: "Open Sans", sans-serif; font-size: 11.5px; color: #f2f2f2; }
.tray-clock { margin-top: 11px; padding-right: 2px; text-align: center; font-family: "Open Sans", sans-serif; font-size: 11.5px; line-height: 18px; color: #f2f2f2; letter-spacing: -.1px; white-space: nowrap; }
.tray-note { margin-top: 14px; height: 26px; padding-right: 2px; display: flex; justify-content: center; }
.tray-line { height: 1px; margin-top: 10px; background: #a9a8bd; }
```
